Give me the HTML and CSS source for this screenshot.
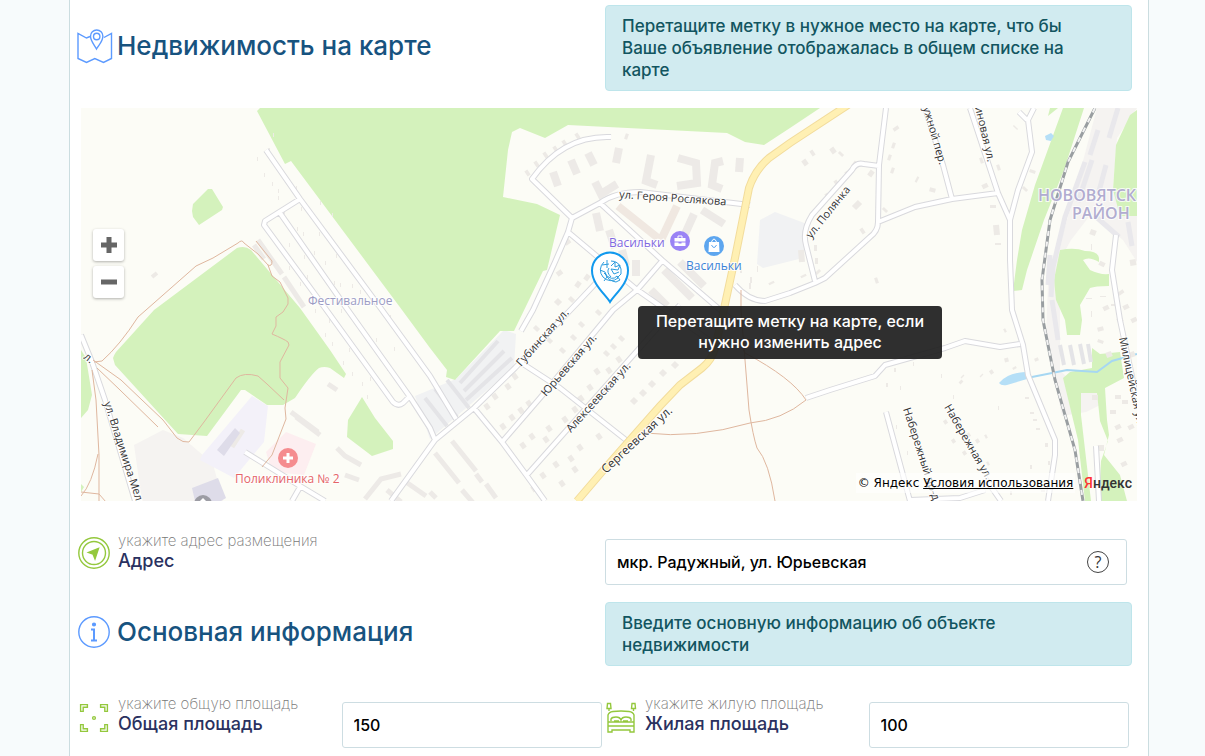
FILE: index.html
```html
<!DOCTYPE html>
<html lang="ru">
<head>
<meta charset="utf-8">
<title>Недвижимость на карте</title>
<link rel="stylesheet" href="styles.css">
</head>
<body>
<main class="page">
  <section class="row">
    <h2 class="heading">
      <svg class="icon icon-map" viewBox="0 0 36 36" aria-hidden="true"><path d="M13 8.500 9.500 10 1 5.500V30.500l8.500 4 8.300-4 8.700 4 8-4V5.500l-7.500 4"/><path d="M19.500 21c-2-4-6-8-6-12.800a6 6 0 0 1 12.400 0c0 4.800-4 8.800-6.400 12.800z"/><circle cx="19.700" cy="8.500" r="3.200"/></svg>
      Недвижимость на карте
    </h2>
    <p class="notice">Перетащите метку в нужное место на карте, что бы Ваше объявление отображалась в общем списке на карте</p>
  </section>

  <section class="map">
    <svg class="map-canvas" viewBox="81 108 1056 393" preserveAspectRatio="xMidYMid slice" role="img" aria-label="Карта">
      <g class="industrial">
        <path d="M1097 108h40l-20 30-4 50 7 28h17v46l-14-22-32-26-20 26-11 20v110l20 22 12-10 10 22-16 8-24 4-6-30-10-50 2-52 22-74z"/>
        <path d="M134 445l29-15 20 8 30 26 10 37h-81z"/>
        <path class="violet" d="M202 455l50-59 16 10-4 36-30 36-34-18z"/>
        <path class="cool" d="M415 396l41-17 48-49 12 4-2 33-84 72z"/>
        <path class="cool" d="M757 264l3-44 15-8 32 12-4 34-40 10z"/>
        <path class="pink" d="M266 452l20-20 30 12-12 31-32-3z"/>
      </g>
      <g class="green">
        <path d="M257 111l3-3h560l-30 20-26 17-19-3-18-9-159-8-23 13-25-10-8 4-4 18-5 47 34 7 23 11-13 55-4 1-14 29-15 31h-14l-45 49-9-3 1-7-17-22-28-38-111-149-6 3z"/>
        <path d="M113 358q1-3 3-6l38-42 83-62q8-3 14 2l49 58 30 42 16 24-2 4-14-10q-6-2-11 0-8 6-24 30l-12 7h-16l-22-15h-4l-34 46-29-2-63-69z"/>
        <path d="M192 211l1-7 15-15h4l11 18-1 3-23 15-6-8zM362 397l13 21 18 23v8l-21 7-25-19 1-17zM81 350l5 8 6 37-4 15-7 8z"/>
        <path d="M1063 108h21l-20 62-20 50-17 50-5 20-9 1 4-31 5-30 13-45 20-55zM1048 116l2-8h8zM1137 110v106h-17l-7-26 3-45 14-30z"/>
        <path d="M1060 250q15-3 25 1 13 0 14 7v4q-10-6-16-2l7 10q10 5 19 4v12q-14 0-19 2l-10 17 2 15-2 15h-13l-2-15-9-20-2-20z"/>
        <path fill-rule="evenodd" d="M1092 348l8 6 20-2 4 26-19 10 2 32 2 15-5 20 16 20 7 26h-42l-7-61-15-62 7-6 22-4zM1081 393v22l10 86h8l2-40 7-20-8-20-3-28z"/>
        <path d="M81 484l3 3-3 5z"/>
      </g>
      <g class="water"><path d="M1045 136l6-3 3 3-3 5-5-1zM999 383q8-10 26-11l2 7-20 6q-6 1-8-2z"/><path class="stream" d="M1027 378l40-8 30 2 15-11 25-7"/></g>

      <path class="rows" d="M425 398l22 28M435 389l22 28M447 380l22 28M460 383l38-42M464 391l40-40M466 400l46-42M1060 345l4 20M1070 345l4 20M1080 344l4 20M1088 344l3 18"/>
      <path class="yard" d="M1098 130l-8 25M1118 108l-9 30M1085 162l-20 55-12 50-2 30M1092 160l-14 42M1106 165l-8 30M1094 215l25 22M1128 222l4 24M1052 300l6 40M1050 255l-2 30"/>
      <g class="building">
        <path d="M553 172l5 14M571 160l6 14M588 153l6 12M619 148l-3 15M595 182l6 12 16-10M651 155l-5 26 11 4M678 158l18 5 1 20-20 3M723 161l-8 2-3 22 10 4M740 158l-1 14M596 213l4 18M609 230l6 18M622 250l4 16M636 260v16M664 270l28 28M680 262l24 24M651 290l16 16M702 210l22 14M694 214l-9 20"/>
        <path class="tan" d="M618 206l40 32M677 206l-16 34"/>
        <path d="M452 441l24 30M476 474l6 8M486 484l10 14M435 453l24 30M462 490l12 14M430 492l6 6M337 448l8 8 16 9M291 412l27 20M296 417l24 18M328 384l9 6M365 499l16-20 20-5M387 490l14 12M406 482l20 14M243 430l-11 17M345 475l14 5M254 245l10 14M258 240l24 34M284 277l20 30"/>
      </g>
      <path class="violet-block" d="M217 450l18-22 5 5-16 23zM192 488l26-10 8 20-5 3h-26z"/>
      <g class="houses">
        <path d="M526 174l3-2M535 165l3-2M544 156l3-2M554 150l3-2M563 144l3-2M576 137l3-2M625 136l3 1M566 240l3 4M558 271l3 4M576 283l4 3M585 276l4 3M556 304l4-4M570 301l3-3M597 314l3-3M580 326l3-3M572 339l3-3M561 352l3-3M548 342l3-3M535 330l3-3M605 355l3-3M612 348l3-3M620 340l3-3M513 378l4-3M506 388l4-3M493 398l4-3M485 408l4-3M501 428l4-3M510 419l4-3M519 412l4-3M527 405l4-3M521 447l4-3M530 438l4-3M544 441l4-3M547 430l4-3M563 421l4-3M573 411l4-3M579 400l4-3M588 389l4-3M595 373l4-3M607 372l4-3M617 361l4-3M632 403l4-4M641 395l4-4M650 386l4-4M661 375l4-4M673 367l4-4M541 477l4-3M554 466l4-3M569 460l4-3M578 449l4-3M597 438l4-3M532 490l4-3M560 485l4-3M573 471l4-3"/>
        <path d="M803 164l4-3M811 154l3-2M831 152l4-3M840 155l2-2M853 163l4 3M869 172l4 3M826 197l3-2M835 184l3-2M846 175l3-2M854 208l6-6M861 232l3-2M895 127l2 3M892 145l3 1M888 157l3 1M891 170l3 1M916 179l2 1M932 192l1-4M984 184l2 4M997 168l3-1M980 161l3-1M1015 128l1-1M1033 170l-1 3M1026 188l-2 2M993 205v3M996 225l1 10M998 243v2M884 211l2-2M875 281l3-1M814 248h3M815 261h3M817 271l2 2M801 250l1 12M803 275l1 2M750 280h2M749 286h2M740 270h2M771 282l1 2M757 269h1M1094 230l-2 5M1091 247h1M1103 262l-2 4M1120 291l2 3M1089 298v1M1103 296v1M1114 304v2M1130 263l6-1M1091 314h1M1105 306l2 4M1125 305l2 4M1100 327l1 4M1119 318l2 4M1133 318l2 4M1101 340l-1 3M1108 352l2 5M1131 352l2 5M1118 395v4M1113 410v4M1125 400v4M1117 425l2 4M1130 425l2 4M1119 438l2 4M1123 462l2 4M1104 448h-6M1095 395v5"/>
        <path d="M1006 330l-2 1M1006 358l1 4M1014 367l1 2M1036 358l1 3M990 373l3-2M982 376l-1-1M962 383l-2-2M962 376l1 1M941 376h1M913 364h1M894 370h2M886 385h2M900 388h1M953 397h1M944 423l3-2M952 442l3-2M963 454l3-2M967 436l3-2M976 442l3-2M985 437l2-1M998 408h1M1027 397v2M1032 412v2M1035 419v2M1038 428v2M1048 445h-3M1050 463h-2M1032 467h-2M1012 493h-2M989 463l-2 1M896 427h1M907 453h1M1043 490v2M152 277l5-4M269 150h1M273 135h1M257 159h1M264 175h1M272 184h1M278 191h1M278 198h1M284 212h1M290 185h1M296 188h1M301 209h1M311 217h1M320 203h1M332 215h1M319 234h1M275 240h1M289 245h1M297 229h1M303 234h1M304 257h1M289 268h1M314 253h1M325 263h1M336 256h1M300 284h1M307 277h1M323 277h1M334 283h1M340 285h1M315 311h1M319 300h1M329 321h1M341 311h1M325 335h1M332 344h1M349 350h1M343 363h1M360 355h1M352 374h1M362 384h1M370 379h1M367 397h1M376 340h1M380 359h1M387 369h1M394 349h1M401 386h1M410 350h1M420 366h1M405 340h1M396 330h1M390 317h1M352 286h1M360 292h1M366 302h1M376 300h1"/>
      </g>

      <g class="casing">
        <path id="streets" d="M266 150l34 49 82 111 48 66 26 43M300 199l-35 22-1 4 61 83 68 94q5 5 10 1l7-7M280 213l65 93 65 91 20 31 5 12M391 501l44-61 39-32 41-40 65-68 30-32M502 442l38-44 73-88 24-20 25-29M526 476l134-151 20-20M474 408l28 34 25 34 18 25M520 362l40 26 66 52M611 137q-48-2-79 42l40 39M750 205l-110-13q-25 0-40 11l-28 15-4 14-13 30-22 48-12 21M600 203l62 57 70 60M568 232l68 57 80 56M735 285q14 16 30 16l25-8 25-10 10-5 45-41q8-6 8-15l1-57 7-57M815 281l-9-36q-4-14 6-30l40-45q4-8 12-6l15 2M878 222l37-15 37-8 46-6M952 199l-9-34-18-57M970 108l28 85 12 27M1034 108l-6 12 4 32-14 38-8 30v40l2 50 11 35 5 30 27 65v15l-7 46M1020 344l-20 3-35-6-20 7-60 17-10 11-45 14-24 8M886 412l24 89M910 500l50-2 25-8M81 335l11 27 13 38 30 101M245 452l55 34 25 15M300 487l-8 14M1116 235l-4 35 8 50 17 80M1096 446l3 55M1027 120l-8-8M985 478l16 23"/>
      </g>
      <use class="surface" href="#streets"/>
      <path class="avenue-edge" d="M577 501l30-35 53-60 20-21 22-17q10-8 13-20l7-30 13-60 14-70q6-18 20-30l21-15 64-42"/>
      <path class="avenue" d="M577 501l30-35 53-60 20-21 22-17q10-8 13-20l7-30 13-60 14-70q6-18 20-30l21-15 64-42"/>
      <path class="trail" d="M94 362l8-1q18-16 36-44l8-7 50-44 17-8 25-15q4-4 6 0l14 11 10 11q4 2 4-4l-16-20M268 265l4 11 8 6 8 16v6l-5 8-7 5v9l-4 8q12 5 16 8l1 3-9 17v16l8 10-3 20 1 11-14 36-10 12M284 400l-17-16-9-8q-14-4-22 2l-32 44-15 20q-6 1-12-4l-14-18-42-40-28-20M97 368l23 22 38 37M92 370l4 30 3 55v46M98 454q-6 30-17 42M81 492l18 2 7 8M741 290v20l4 50 4 50q4 26 8 38 12 14 18 53M645 433q50 6 105-10 32-3 56-23-14-22-61-47l-5-10"/>
      <path class="rail" d="M1095 108l-27 54-18 58-8 60 1 40 12 60 20 70 8 51"/>
      <path class="rail-dash" d="M1095 108l-27 54-18 58-8 60 1 40 12 60 20 70 8 51"/>

      <g class="poi">
        <circle class="purple" cx="680" cy="241" r="10"/><path class="glyph" d="M674.500 238h11v3.500h-11zM674.500 242.500h4v1h3v-1h4v3.500h-11z"/><path class="glyph-line" d="M678 238v-2h4v2"/>
        <circle class="blue" cx="714" cy="246" r="10"/><path class="glyph" d="M709 242h10l.5 10h-11z"/><path class="glyph-line" d="M711.500 242q2.500-6 5 0"/><path class="smile" d="M711.500 245q2.500 5 5 0"/>
        <circle class="red" cx="288" cy="458" r="10"/><path class="glyph" d="M286.500 453h3v3.500h3.500v3h-3.500v3.500h-3v-3.500H283v-3h3.500z"/>
        <circle class="grey" cx="203" cy="504" r="9"/><path class="glyph" d="M200 501l3-3 3 3z"/>
      </g>
      <g class="labels">
        <text transform="translate(619 198) rotate(4)">ул. Героя Рослякова</text>
        <text transform="translate(521 367) rotate(-48)">Губинская ул.</text>
        <text transform="translate(546 397) rotate(-49)">Юрьевская ул.</text>
        <text transform="translate(571 433) rotate(-48)">Алексеевская ул.</text>
        <text class="major" transform="translate(606 474) rotate(-43)">Сергеевская ул.</text>
        <text transform="translate(811 239) rotate(-51)">ул. Полянка</text>
        <text class="long" transform="translate(104 403) rotate(72)">ул. Владимира Мелан</text>
        <text transform="translate(83 358) rotate(38)">л.</text>
        <text transform="translate(923 108) rotate(74)">ужной пер.</text>
        <text transform="translate(975 107) rotate(77)">иновая ул.</text>
        <text transform="translate(903 409) rotate(72)">Набережный пр-д</text>
        <text transform="translate(944 407) rotate(60)">Набережная ул.</text>
        <text transform="translate(1119 338) rotate(78)">Милицейская ул.</text>
        <text class="place" x="308" y="305">Фестивальное</text>
        <text class="district" x="1038" y="201">НОВОВЯТСКИЙ</text>
        <text class="district" x="1072" y="219">РАЙОН</text>
        <text class="purple" x="609" y="247">Васильки</text>
        <text class="blue" x="686" y="270">Васильки</text>
        <text class="red" x="235" y="483">Поликлиника № 2</text>
      </g>
      <g class="pin">
        <path class="pin-body" d="M610 302c-5-8-18-18-18-31.500a18 18 0 0 1 36 0c0 13.500-13 23.500-18 31.500z"/>
        <path class="pin-art" d="M604 262a10.500 10.500 0 1 0 14 16M611 261q8 0 10 8v5l-4 4M600 270l5 2 2 5-3 4M602 265l7-1M607 260v8M604 273q8 9 13 3l3 4-4 2q-8-1-11-9M611 266l4-4v5l5-2-2 5-7-1 3 5 5-2M609 268q-3 4 2 9"/>
      </g>
    </svg>
    <div class="zoom">
      <button type="button" class="zoom-button" aria-label="Приблизить"><svg viewBox="0 0 16 16" aria-hidden="true"><path d="M8 0v16M0 8h16"/></svg></button>
      <button type="button" class="zoom-button" aria-label="Отдалить"><svg viewBox="0 0 16 16" aria-hidden="true"><path d="M0 8h16"/></svg></button>
    </div>
    <div class="tooltip" role="tooltip">Перетащите метку на карте, если нужно изменить адрес</div>
    <div class="credits">
      <span class="terms">© Яндекс <a href="#">Условия использования</a></span>
      <span class="brand"><b>Я</b>ндекс</span>
    </div>
  </section>

  <section class="row row-address">
    <label class="caption" for="address">
      <svg class="icon icon-green" viewBox="0 0 32 32" aria-hidden="true"><circle cx="16" cy="16" r="15.200"/><circle cx="16" cy="16" r="11.500"/><path class="solid" d="M20.500 11.500l-10 4 4.500 1.500 2 5z"/></svg>
      <span class="caption-text"><span class="hint">укажите адрес размещения</span><span class="name">Адрес</span></span>
    </label>
    <div class="address-box">
      <input class="field" id="address" type="text" value="мкр. Радужный, ул. Юрьевская">
      <button type="button" class="help" aria-label="Помощь">?</button>
    </div>
  </section>

  <section class="row row-info">
    <h2 class="heading">
      <svg class="icon icon-info" viewBox="0 0 32 32" aria-hidden="true"><circle cx="16" cy="16" r="15.200"/><circle class="solid" cx="16" cy="8.500" r="1.400"/><path class="stem" d="M13 13.500h3v11M13 24.500h6"/></svg>
      Основная информация
    </h2>
    <p class="notice">Введите основную информацию об объекте недвижимости</p>
  </section>

  <section class="row row-area">
    <div class="pair">
      <label class="caption" for="total">
        <svg class="icon icon-green" viewBox="0 0 32 32" aria-hidden="true"><path d="M2.600 9.400V2.600h6.800v2.600H5.200v4.200zM22.600 2.600h6.800v6.800h-2.600V5.200h-4.200zM2.600 22.600h2.600v4.200h4.200v2.600H2.600zM26.800 22.600h2.600v6.800h-6.800v-2.600h4.200z"/><circle cx="16" cy="16" r="1.400"/></svg>
        <span class="caption-text"><span class="hint">укажите общую площадь</span><span class="name">Общая площадь</span></span>
      </label>
      <input class="field" id="total" type="text" value="150">
    </div>
    <div class="pair">
      <label class="caption" for="living">
        <svg class="icon icon-green" viewBox="0 0 32 32" aria-hidden="true"><path d="M2.500 1.500h3l.5 5H2zM4 6.500v2.500M27 1.500h3l.5 5h-4zM28.500 6.500v2.500M3 20v-7q1-3 5-3.500 8-1 16 0 4 .5 5 3.500v7M3 20h26v10h-4v-2H7v2H3zM3 24h26M6 19v-2q1-2 5-2 4 0 5 3 1-3 5-3t5 2v2M9 19h5M18 19h5"/></svg>
        <span class="caption-text"><span class="hint">укажите жилую площадь</span><span class="name">Жилая площадь</span></span>
      </label>
      <input class="field" id="living" type="text" value="100">
    </div>
  </section>
</main>
</body>
</html>
```
FILE: styles.css
```css
* { box-sizing: border-box; }

body {
  margin: 0;
  padding: 0 56px 0 69px;
  background: #f7fbfc;
  font-family: Inter, "Open Sans", sans-serif;
  font-weight: 500;
  color: #000;
}

.page {
  min-height: 100vh;
  padding-top: 5px;
  background: #fff;
  border: solid #cbdde0;
  border-width: 0 1px;
}

.row {
  display: grid;
  grid-template-columns: 1fr 1fr;
  padding: 0 16px 0 8px;
}
.row-address { margin-top: 38px; }
.row-info { margin-top: 17px; }
.row-area { margin-top: 36px; }

.heading {
  display: flex;
  align-items: center;
  gap: 7px;
  margin: 0;
  padding-bottom: 4px;
  font-size: 26px;
  line-height: 32px;
  font-weight: 500;
  color: #17537f;
}

.icon {
  flex: none;
  width: 32px;
  height: 32px;
  fill: none;
  stroke-width: 1.4;
}
.icon-map { width: 36px; height: 36px; margin: 0 -3px 0 -1px; }
.icon-map, .icon-info { stroke: #5c9aff; }
.icon-info .solid { fill: #5c9aff; }
.icon-info .stem { stroke-width: 2; }
.icon-green { stroke: #94c83d; }
.icon-green .solid { fill: #94c83d; }

.notice {
  margin: 0;
  padding: 9px 48px 9px 16px;
  border: 1px solid #bee5eb;
  border-radius: 4px;
  background: #d1ebf0;
  color: #125560;
  font-size: 17px;
  line-height: 22px;
}

.caption { display: flex; gap: 8px; align-items: flex-start; }
.caption-text { display: flex; flex-direction: column; line-height: 20px; margin-top: -8px; }
.row-address .icon { margin-top: -2px; }
.hint { font-size: 15px; font-weight: 200; color: #777; }
.name { font-size: 18px; font-weight: 500; color: #2a3160; }

.pair { display: grid; grid-template-columns: 1fr 1fr; }
.pair .field { width: calc(100% - 3px); }

.field {
  width: 100%;
  height: 46px;
  padding: 0 11px;
  border: 1px solid #cddde2;
  border-radius: 3px;
  background: #fff;
  color: #000;
  font: inherit;
  font-size: 16px;
}
.address-box { position: relative; margin-right: 5px; }
.help {
  position: absolute;
  top: 12px;
  right: 18px;
  width: 22px;
  height: 22px;
  padding: 0;
  border: 1px solid #444;
  border-radius: 50%;
  background: none;
  color: #333;
  font: 400 16px/20px "Open Sans", sans-serif;
}

.map {
  position: relative;
  height: 393px;
  margin: 17px 11px 0;
  overflow: hidden;
  background: #fcfcf6;
}
.map-canvas { display: block; width: 100%; height: 100%; fill: none; }

.industrial { fill: #f5f3f1; }
.industrial .violet { fill: #f3f1f9; }
.industrial .cool { fill: #f1f2f3; }
.industrial .pink { fill: #fdeef0; }
.green { fill: #d4f2bc; }
.water { fill: #b5dff7; }
.stream { fill: none; stroke: #a6d7f2; stroke-width: 2; }
.building { stroke: #edeae7; stroke-width: 8; }
.building path:last-child { stroke-width: 5; }
.building .tan { stroke: #f0e8e1; }
.violet-block { fill: #dedce9; }
.houses { stroke: #edeae6; stroke-width: 6; }
.houses path:last-child { stroke-width: 4; }
.rows { stroke: #e4e4e7; stroke-width: 4; }
.yard { stroke: #e9e8ec; stroke-width: 5; }
.casing { stroke: #d9d9dd; stroke-width: 6; stroke-linejoin: round; }
.surface { stroke: #fff; stroke-width: 4; stroke-linejoin: round; }
#streets { stroke: inherit; stroke-width: inherit; }
.avenue-edge { stroke: #f2dc9c; stroke-width: 8; }
.avenue { stroke: #fff0b3; stroke-width: 6; }
.trail { stroke: #dfb79f; stroke-width: 1; }
.rail { stroke: #999ea1; stroke-width: 3; }
.rail-dash { stroke: #f2f2f2; stroke-width: 2; stroke-dasharray: 5 6; }

.poi .purple { fill: #9a83f5; }
.poi .blue { fill: #5da6ef; }
.poi .red { fill: #f58c8f; }
.poi .grey { fill: #9c9ca4; }
.poi .glyph { fill: #fff; }
.glyph-line { stroke: #fff; stroke-width: 1; }
.smile { stroke: #5da6ef; stroke-width: 1; }

.labels {
  fill: #333;
  stroke: #fff;
  stroke-width: 2;
  stroke-opacity: 0.8;
  paint-order: stroke;
  font: 400 11px "Open Sans", "Noto Sans", sans-serif;
}
.labels .major, .labels .place { font-size: 12px; }
.labels .place { fill: #9c9cc4; }
.labels .district { font-size: 16px; font-weight: 600; fill: #b1acd0; }
.labels .purple, .labels .blue, .labels .red { font-size: 12px; font-weight: 500; }
.labels .purple { fill: #8068e0; }
.labels .blue { fill: #3c83d6; }
.labels .red { fill: #e56468; }

.pin-body { fill: #fff; stroke: #1299ee; stroke-width: 2; }
.pin-art { stroke: #2c9bdd; stroke-width: 1; }

.zoom { position: absolute; left: 12px; top: 121px; display: grid; gap: 5px; }
.zoom-button {
  display: grid;
  place-items: center;
  width: 31px;
  height: 32px;
  padding: 0;
  border: 0;
  border-radius: 3px;
  background: #fff;
  box-shadow: 0 1px 3px rgba(0, 0, 0, 0.3);
}
.zoom-button svg { width: 16px; height: 16px; stroke: #666; stroke-width: 5; }

.tooltip {
  position: absolute;
  left: 557px;
  top: 198px;
  width: 304px;
  padding: 5px 14px 6px;
  border-radius: 4px;
  background: rgba(29, 29, 29, 0.92);
  color: #fff;
  font-size: 16px;
  line-height: 21px;
  text-align: center;
}

.credits {
  position: absolute;
  right: 5px;
  bottom: 8px;
  display: flex;
  align-items: center;
  gap: 9px;
  line-height: 20px;
}
.terms {
  padding: 0 2px;
  background: rgba(255, 255, 255, 0.6);
  font-family: "DejaVu Sans", sans-serif;
  font-size: 12px;
  font-weight: 400;
}
.terms a { color: #000; }
.brand { color: #333; font: 500 14px/20px Roboto, sans-serif; }
.brand b { color: #f33; font-weight: 500; }
```
